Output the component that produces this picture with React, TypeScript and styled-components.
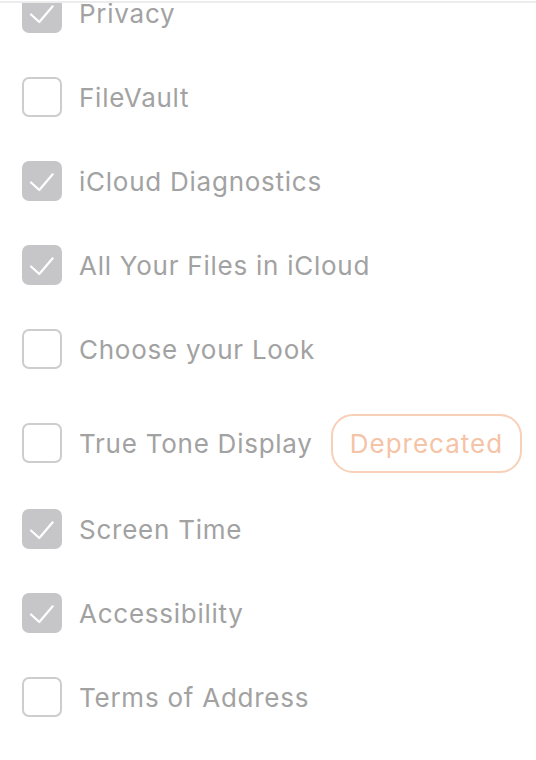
import React from "react";
import styled, { createGlobalStyle } from "styled-components";

const items = [
  { label: "Privacy", checked: true },
  { label: "FileVault", checked: false },
  { label: "iCloud Diagnostics", checked: true },
  { label: "All Your Files in iCloud", checked: true },
  { label: "Choose your Look", checked: false },
  { label: "True Tone Display", checked: false, badge: "Deprecated" },
  { label: "Screen Time", checked: true },
  { label: "Accessibility", checked: true },
  { label: "Terms of Address", checked: false },
];

export default function App() {
  return (
    <>
      <GlobalStyle />
      <Frame>
        <List>
          {items.map((it) => (
            <Row key={it.label} $tall={!!it.badge}>
              <Box $checked={it.checked}>
                {it.checked && (
                  <svg width="40" height="40" viewBox="0 0 40 40" fill="none">
                    <path
                      d="M9 21.5 L17.3 29 L30.7 13.3"
                      stroke="#fff"
                      strokeWidth="2.2"
                      strokeLinecap="round"
                      strokeLinejoin="round"
                    />
                  </svg>
                )}
              </Box>
              <Label>{it.label}</Label>
              {it.badge && <Badge>{it.badge}</Badge>}
            </Row>
          ))}
        </List>
      </Frame>
    </>
  );
}

const GlobalStyle = createGlobalStyle`
  html, body { margin: 0; padding: 0; background: #fff; }
  body { font-family: Inter, "Noto Sans", sans-serif; }
`;

const Frame = styled.div`
  margin-top: 1px;
  border-top: 2px solid #ececec;
  height: 757px;
  overflow: hidden;
`;

const List = styled.div`
  display: flex;
  flex-direction: column;
  gap: 44px;
  margin-top: -10px;
  padding-left: 22px;
`;

const Row = styled.div<{ $tall: boolean }>`
  display: flex;
  align-items: center;
  height: 40px;
  padding: ${({ $tall }) => ($tall ? "10px 0 2px" : "0")};
`;

const Box = styled.div<{ $checked: boolean }>`
  box-sizing: border-box;
  width: 40px;
  height: 40px;
  flex: none;
  border-radius: 7px;
  background: ${({ $checked }) => ($checked ? "#c6c6c8" : "#fff")};
  border: ${({ $checked }) => ($checked ? "none" : "2px solid #cdcdcd")};
  display: flex;
  align-items: center;
  justify-content: center;
  svg { display: block; }
`;

const Label = styled.span`
  margin-left: 17px;
  font-size: 26px;
  letter-spacing: 0.75px;
  color: #a2a2a2;
  white-space: nowrap;
`;

const Badge = styled.span`
  box-sizing: border-box;
  margin-left: 18px;
  height: 59px;
  padding: 0 17px;
  display: flex;
  align-items: center;
  border: 2px solid #f8cfb7;
  border-radius: 22px;
  font-size: 26px;
  letter-spacing: 1px;
  color: #f5c3a6;
  white-space: nowrap;
`;
